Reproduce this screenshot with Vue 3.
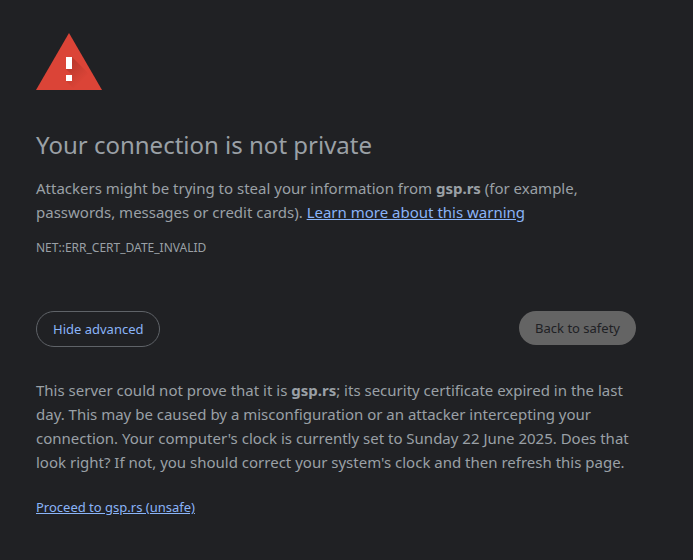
<script setup>
import { ref } from 'vue'

const host = 'gsp.rs'
const showDetails = ref(true)
</script>

<template>
  <main class="interstitial">
    <svg class="icon" viewBox="0 0 66 57" aria-hidden="true">
      <defs>
        <linearGradient id="glyph-shadow" gradientUnits="userSpaceOnUse" x1="33" y1="33" x2="47" y2="47">
          <stop offset="0" stop-color="#8f2a20" stop-opacity=".4" />
          <stop offset="1" stop-color="#8f2a20" stop-opacity="0" />
        </linearGradient>
      </defs>
      <path d="M0 57 33 0l33 57z" fill="#db4437" />
      <path d="M36 24 66 54V57H39L30 48l6-6-6-6z" fill="url(#glyph-shadow)" />
      <path d="M30 24h6v12h-6zM30 42h6v6h-6z" fill="#fff" />
    </svg>
    <h1>Your connection is not private</h1>
    <p class="body">
      Attackers might be trying to steal your information from <strong>{{ host }}</strong> (for example,
      passwords, messages or credit cards). <a href="#learn">Learn more about this warning</a>
    </p>
    <div class="code">NET::ERR_CERT_DATE_INVALID</div>
    <div class="actions">
      <button type="button" class="secondary" @click="showDetails = !showDetails">
        {{ showDetails ? 'Hide advanced' : 'Advanced' }}
      </button>
      <button type="button" class="primary">Back to safety</button>
    </div>
    <section v-if="showDetails">
      <p class="body">
        This server could not prove that it is <strong>{{ host }}</strong>; its security certificate expired in the
        last day. This may be caused by a misconfiguration or an attacker intercepting your connection. Your
        computer's clock is currently set to Sunday 22 June 2025. Does that look right? If not, you should correct
        your system's clock and then refresh this page.
      </p>
      <a class="proceed" href="#proceed">Proceed to {{ host }} (unsafe)</a>
    </section>
  </main>
</template>

<style>
body {
  background: #202124;
}
</style>

<style scoped>
.interstitial {
  box-sizing: border-box;
  max-width: 672px;
  padding: 33px 36px 40px;
  color: #9aa0a6;
  font-family: "Noto Sans", sans-serif;
  font-size: 15px;
  line-height: 24px;
}
.icon {
  display: block;
  width: 66px;
  height: 57px;
}
h1 {
  margin: 40px 0 16px;
  font-size: 24px;
  font-weight: 400;
  line-height: 30px;
}
.body {
  margin: 0;
}
a {
  color: #8ab4f8;
}
.code {
  margin-top: 15px;
  font-size: 12px;
  line-height: 18px;
}
.actions {
  display: flex;
  align-items: flex-start;
  justify-content: space-between;
  margin: 54px 0 31px;
}
button {
  font-family: inherit;
  font-size: 13px;
  line-height: 18px;
  padding: 8px 16px;
  border: 0;
  border-radius: 18px;
  cursor: pointer;
}
.secondary {
  border: 1px solid #5f6368;
  background: #202124;
  color: #8ab4f8;
}
.primary {
  background: #646464;
  color: #202124;
}
.proceed {
  display: inline-block;
  margin-top: 23px;
  font-size: 13px;
  line-height: 20px;
}
</style>
